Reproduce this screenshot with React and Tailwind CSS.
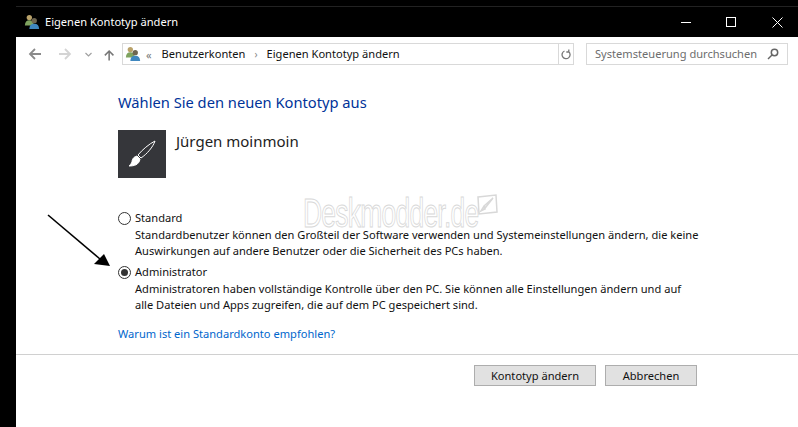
import React from 'react';

const UsersIcon = ({ className }) => (
  <svg className={className} viewBox="0 0 18 18">
    <circle cx="6" cy="4" r="3" fill="#b9a26a" />
    <path d="M1 13c0-4 2-6 5-6s5 2 5 6z" fill="#7fa35f" />
    <circle cx="11.500" cy="7.500" r="3" fill="#6f6650" />
    <path d="M6 17c0-4 2-6 5.500-6s5.500 2 5.500 6z" fill="#3f87bf" />
  </svg>
);

const ToolbarArrow = ({ className, d }) => (
  <svg className={className} viewBox="0 0 14 12" fill="none" stroke="currentColor" strokeWidth="1.800">
    <path d={d} />
  </svg>
);

const Radio = ({ checked }) => (
  <span className="w-[13px] h-[13px] rounded-full border border-[#333] bg-white flex items-center justify-center shrink-0">
    {checked && <span className="w-[7px] h-[7px] rounded-full bg-[#333]" />}
  </span>
);

const AccountOption = ({ label, checked, lines }) => (
  <div>
    <div className="flex items-center gap-[4px] h-[16px]">
      <Radio checked={checked} />
      <span className="leading-[16px]">{label}</span>
    </div>
    <div className="pl-[17px] mt-[1px] leading-[16px] whitespace-nowrap">
      {lines.map((line) => (
        <div key={line}>{line}</div>
      ))}
    </div>
  </div>
);

export default function App() {
  return (
    <div className="relative w-[798px] h-[427px] overflow-hidden bg-black flex font-['Noto_Sans',sans-serif] text-[11.1px] text-[#111]">
      <div className="w-[16px] shrink-0" />
      <div className="flex-1 flex flex-col min-w-0">
        {/* title bar */}
        <div className="h-[31px] mt-[6px] shrink-0 border-t border-[#222] flex items-center text-white">
          <UsersIcon className="w-[16px] h-[16px] ml-[8px] mr-[5px]" />
          <span>Eigenen Kontotyp ändern</span>
          <div className="ml-auto flex items-center">
            <span className="w-[10px] h-px bg-white mr-[35px]" />
            <span className="w-[10px] h-[10px] border border-white mr-[36px]" />
            <svg className="w-[11px] h-[11px] mr-[15px]" viewBox="0 0 11 11" stroke="white" strokeWidth="1">
              <path d="M.5.5l10 10M10.500.5l-10 10" />
            </svg>
          </div>
        </div>

        <div className="flex-1 bg-white flex flex-col min-h-0">
          {/* address row */}
          <div className="h-[22px] mt-[6px] shrink-0 flex items-center">
            <ToolbarArrow className="w-[14px] h-[12px] ml-[12px] text-[#8a8a8a]" d="M13 6H2M7 1 2 6l5 5" />
            <ToolbarArrow className="w-[14px] h-[12px] ml-[16px] text-[#d4d4d4]" d="M1 6h11M7 1l5 5-5 5" />
            <svg className="w-[7px] h-[5px] ml-[13px] text-[#a0a0a0]" viewBox="0 0 7 5" fill="none" stroke="currentColor" strokeWidth="1.200">
              <path d="M.5 1 3.500 4 6.500 1" />
            </svg>
            <ToolbarArrow className="w-[12px] h-[13px] ml-[12px] text-[#777]" d="M6 13V2M1 7l5-5 5 5" />
            <div className="w-[452px] h-[22px] ml-[6px] border border-[#d9d9d9] flex items-center">
              <UsersIcon className="w-[16px] h-[16px] ml-[2px] mr-[5px]" />
              <span className="text-[#777] text-[11px] mr-[10px] leading-none">«</span>
              <span>Benutzerkonten</span>
              <span className="text-[#888] text-[10px] mx-[9px] leading-none">›</span>
              <span>Eigenen Kontotyp ändern</span>
              <div className="ml-auto h-full w-[15px] border-l border-[#d9d9d9] flex items-center justify-center">
                <svg className="w-[10px] h-[11px] text-[#777]" viewBox="0 0 10 11" fill="none" stroke="currentColor" strokeWidth="1.300">
                  <path d="M7.500 2.500a4 4 0 1 1-4-.5M7.800.5v2.500H5.300" />
                </svg>
              </div>
            </div>
            <div className="w-[202px] h-[22px] ml-[12px] border border-[#d9d9d9] flex items-center pl-[8px] text-[#6d6d6d]">
              <span className="whitespace-nowrap">Systemsteuerung durchsuchen</span>
              <svg className="w-[12px] h-[12px] ml-auto mr-[8px] text-[#666]" viewBox="0 0 12 12" fill="none" stroke="currentColor" strokeWidth="1.500">
                <circle cx="7.500" cy="4.500" r="3.200" />
                <path d="M5 7 1 11" />
              </svg>
            </div>
          </div>

          {/* content */}
          <div className="pl-[102px] flex-1 flex flex-col">
            <h1 className="mt-[27px] text-[14.700px] leading-[20px] text-[#003399] whitespace-nowrap">Wählen Sie den neuen Kontotyp aus</h1>
            <div className="mt-[18px] flex h-[48px]">
              <div className="w-[48px] h-[48px] bg-[#35363a]">
                <svg className="w-[48px] h-[48px]" viewBox="0 0 48 48" fill="none" stroke="white" strokeWidth="1">
                  <path d="M37 11C31 14 24 20 20 25l3 3C29 24 35 17 37 11z" />
                  <path d="M19 26c-4 1-5 4-5 6-1 2-2 3-3 4 5 0 10-1 11-7z" fill="white" />
                </svg>
              </div>
              <span className="ml-[10px] mt-[1px] text-[15px] leading-[20px] text-[#222]">Jürgen moinmoin</span>
            </div>
            <div className="mt-[32px] flex flex-col gap-[5px]">
              <AccountOption
                label="Standard"
                lines={[
                  'Standardbenutzer können den Großteil der Software verwenden und Systemeinstellungen ändern, die keine',
                  'Auswirkungen auf andere Benutzer oder die Sicherheit des PCs haben.',
                ]}
              />
              <AccountOption
                label="Administrator"
                checked
                lines={[
                  'Administratoren haben vollständige Kontrolle über den PC. Sie können alle Einstellungen ändern und auf',
                  'alle Dateien und Apps zugreifen, die auf dem PC gespeichert sind.',
                ]}
              />
            </div>
            <a className="mt-[13px] leading-[16px] text-[#0066cc]">Warum ist ein Standardkonto empfohlen?</a>
          </div>

          {/* footer */}
          <div className="h-[73px] shrink-0 border-t border-[#d0d0d0] flex justify-end items-start pt-[10px] pr-[101px] gap-[9px]">
            <button className="w-[122px] h-[21px] bg-[#e1e1e1] border border-[#adadad] leading-none">Kontotyp ändern</button>
            <button className="w-[92px] h-[21px] bg-[#e1e1e1] border border-[#adadad] leading-none">Abbrechen</button>
          </div>
        </div>
      </div>

      {/* watermark */}
      <div className="absolute left-[303px] top-[200px] flex items-start pointer-events-none">
        <span className="font-['Liberation_Sans',sans-serif] text-[40px] leading-[26px] tracking-[-1.100px] text-white [-webkit-text-stroke:1px_#d8d8d8] [transform:scaleX(0.66)] origin-left whitespace-nowrap">Deskmodder.de</span>
      </div>
      <svg className="absolute left-[476px] top-[194px] w-[22px] h-[22px]" viewBox="0 0 22 22" fill="none" stroke="#d8d8d8" strokeWidth="1.500">
        <path d="M2 3 20 1l1 17-18 2z" />
        <path d="M17 4 8 12l1.500 1.500zM7.500 13 5 17l4-2z" />
      </svg>

      {/* arrow annotation */}
      <svg className="absolute left-[45px] top-[212px] w-[70px] h-[60px]" viewBox="0 0 70 60" fill="none">
        <path d="M3 3 55 47" stroke="black" strokeWidth="1.600" />
        <path d="M65 54 49 52 59 42z" fill="black" />
      </svg>
    </div>
  );
}
